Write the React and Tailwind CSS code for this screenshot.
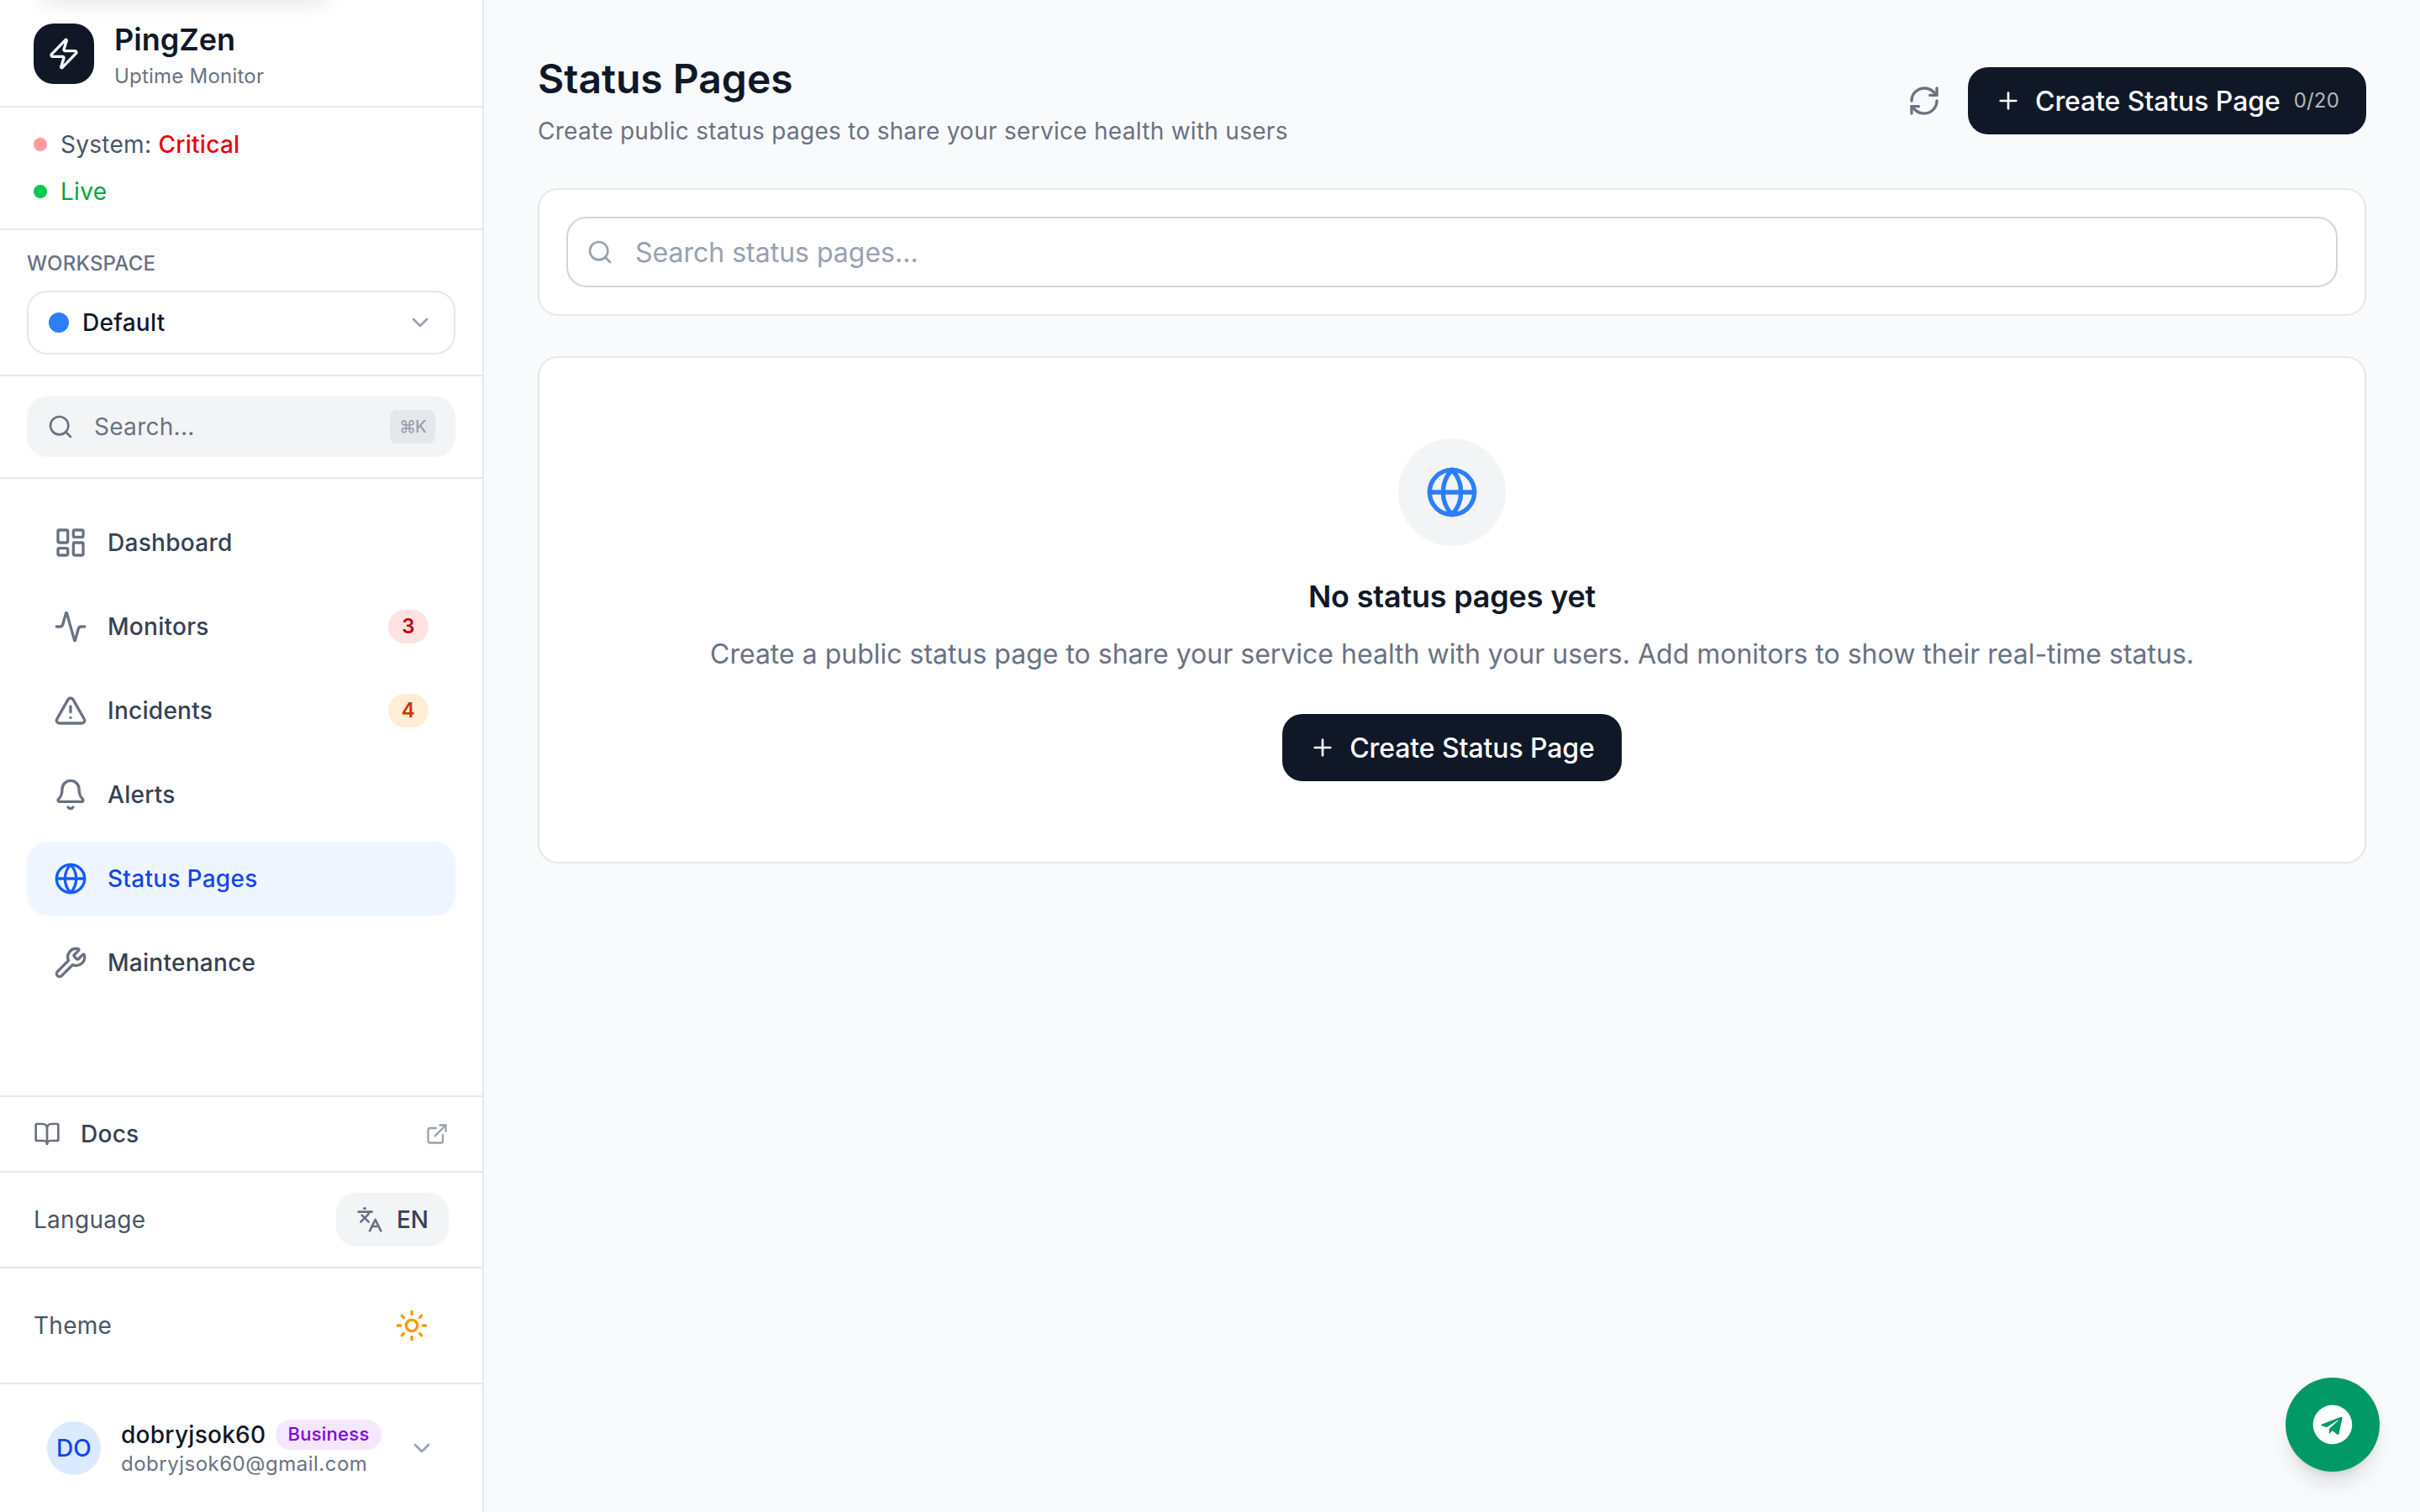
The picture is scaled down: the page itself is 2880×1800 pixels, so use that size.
import React from "react";
import {
  Zap,
  ChevronDown,
  Search,
  LayoutDashboard,
  Activity,
  TriangleAlert,
  Bell,
  Globe,
  Wrench,
  BookOpen,
  ExternalLink,
  Languages,
  Sun,
  Plus,
  RefreshCw,
} from "lucide-react";
import { FaTelegram } from "react-icons/fa";

const navItems = [
  { label: "Dashboard", icon: LayoutDashboard },
  { label: "Monitors", icon: Activity, badge: "3", badgeClass: "bg-red-100 text-red-700" },
  { label: "Incidents", icon: TriangleAlert, badge: "4", badgeClass: "bg-orange-100 text-orange-700" },
  { label: "Alerts", icon: Bell },
  { label: "Status Pages", icon: Globe, active: true },
  { label: "Maintenance", icon: Wrench },
];

const Sidebar = () => {
  return (
    <aside className="relative flex flex-col w-[576px] h-full shrink-0 overflow-hidden bg-white border-r-2 border-gray-200 tracking-[0.28px]">
      <div className="absolute -top-20 left-[50px] w-[340px] h-20 bg-white shadow-[0_4px_24px_rgba(0,0,0,0.1)] rounded-lg"></div>

      <div className="flex items-center gap-6 h-32 pl-10 border-b-2 border-gray-200">
        <div className="flex items-center justify-center w-[72px] h-[72px] mt-0.5 rounded-3xl bg-gray-900 text-white">
          <Zap className="w-10 h-10" strokeWidth={2} />
        </div>
        <div>
          <div className="text-[36px] leading-14 font-semibold tracking-normal text-gray-900">PingZen</div>
          <div className="text-2xl leading-8 tracking-[0.22px] text-gray-500">Uptime Monitor</div>
        </div>
      </div>

      <div className="flex flex-col gap-4 py-6 pl-10 border-b-2 border-gray-200 text-[28px] leading-10">
        <div className="flex items-center gap-4">
          <span className="w-4 h-4 rounded-full bg-[#ff9a9c]"></span>
          <span className="text-gray-600">
            System: <span className="font-medium text-red-600">Critical</span>
          </span>
        </div>
        <div className="flex items-center gap-4">
          <span className="w-4 h-4 rounded-full bg-green-500"></span>
          <span className="text-green-600">Live</span>
        </div>
      </div>

      <div className="px-8 py-6 border-b-2 border-gray-200">
        <div className="mb-4 text-2xl leading-8 font-medium uppercase tracking-[0.2px] text-gray-500">Workspace</div>
        <div className="flex items-center justify-between h-[76px] px-6 rounded-3xl border-2 border-gray-200 bg-white">
          <div className="flex items-center gap-4">
            <span className="w-6 h-6 rounded-full bg-blue-500"></span>
            <span className="text-[28px] font-medium text-gray-900">Default</span>
          </div>
          <ChevronDown className="w-8 h-8 text-gray-400" />
        </div>
      </div>

      <div className="px-8 py-6 border-b-2 border-gray-200">
        <div className="flex items-center h-[72px] pl-6 pr-6 rounded-3xl bg-gray-100">
          <Search className="w-8 h-8 text-gray-500" />
          <span className="flex-1 ml-6 text-[28px] text-gray-500">Search...</span>
          <kbd className="flex items-center justify-center w-[54px] h-10 rounded-lg bg-gray-200 font-['Inter',sans-serif] text-xl font-medium tracking-[-1px] text-gray-400">⌘K</kbd>
        </div>
      </div>

      <nav className="flex-1 flex flex-col gap-3 px-8 py-8">
        {navItems.map((item) => {
          const Icon = item.icon;
          return (
            <div
              key={item.label}
              className={
                item.active
                  ? "flex items-center gap-6 h-[88px] shrink-0 px-8 rounded-3xl bg-blue-50 text-blue-700"
                  : "flex items-center gap-6 h-[88px] shrink-0 px-8 rounded-3xl text-gray-700"
              }
            >
              <Icon className={item.active ? "w-10 h-10 text-blue-600" : "w-10 h-10 text-gray-500"} />
              <span className="flex-1 text-[28px] font-medium">{item.label}</span>
              {item.badge && (
                <span className={`flex items-center justify-center w-12 h-10 rounded-full text-2xl font-semibold ${item.badgeClass}`}>
                  {item.badge}
                </span>
              )}
            </div>
          );
        })}
      </nav>

      <div className="flex items-center justify-between h-[90px] shrink-0 px-10 border-t-2 border-gray-200">
        <div className="flex items-center gap-6">
          <BookOpen className="w-8 h-8 text-gray-500" />
          <span className="text-[28px] font-medium text-gray-700">Docs</span>
        </div>
        <ExternalLink className="w-7 h-7 text-gray-400" />
      </div>

      <div className="flex items-center justify-between px-10 py-6 border-t-2 border-gray-200">
        <span className="text-[28px] text-gray-600">Language</span>
        <div className="flex items-center gap-4 h-16 px-6 rounded-3xl bg-gray-100">
          <Languages className="w-8 h-8 text-gray-500" />
          <span className="text-[28px] font-medium tracking-normal text-gray-700">EN</span>
        </div>
      </div>

      <div className="flex items-center justify-between px-10 py-6 border-t-2 border-gray-200">
        <span className="text-[28px] text-gray-600">Theme</span>
        <div className="p-6">
          <Sun className="w-10 h-10 text-amber-500" />
        </div>
      </div>

      <div className="flex items-center h-[154px] shrink-0 pl-14 pr-14 gap-6 border-t-2 border-gray-200">
        <div className="flex items-center justify-center w-16 h-16 shrink-0 rounded-full bg-blue-100 text-[28px] font-medium text-blue-700">DO</div>
        <div className="flex-1 min-w-0">
          <div className="flex items-center gap-3">
            <span className="text-[28px] leading-9 font-medium text-gray-900">dobryjsok60</span>
            <span className="flex items-center h-9 px-3.5 rounded-full bg-purple-100 text-[22px] font-medium text-purple-700">Business</span>
          </div>
          <div className="mt-px text-2xl leading-8 tracking-[0.5px] text-gray-500">dobryjsok60@gmail.com</div>
        </div>
        <ChevronDown className="w-8 h-8 text-gray-400" />
      </div>
    </aside>
  );
};

const CreateButton = ({ count }) => {
  return (
    <button className="flex items-center gap-4 h-20 px-8 rounded-3xl bg-gray-900 text-white">
      <Plus className="w-8 h-8" />
      <span className="pt-0.5 text-[32px] font-medium tracking-[-0.1px]">Create Status Page</span>
      {count && <span className="text-2xl tracking-[0.2px] text-white/70">{count}</span>}
    </button>
  );
};

const App = () => {
  return (
    <div className="relative flex w-full h-screen overflow-hidden bg-gray-50 font-['Inter',sans-serif]">
      <Sidebar />

      <main className="flex-1 min-w-0 px-16 pt-16">
        <div className="flex items-center justify-between mb-12">
          <div>
            <h1 className="text-5xl leading-[60px] font-semibold text-gray-900">Status Pages</h1>
            <p className="mt-3 text-[28px] leading-10 tracking-[0.28px] text-gray-500">Create public status pages to share your service health with users</p>
          </div>
          <div className="flex items-center gap-4">
            <button className="p-4 text-gray-500">
              <RefreshCw className="w-10 h-10" />
            </button>
            <CreateButton count="0/20" />
          </div>
        </div>

        <div className="p-8 mb-12 rounded-3xl border-2 border-gray-200 bg-white">
          <div className="relative">
            <Search className="absolute left-6 top-[26px] w-8 h-8 text-gray-400" />
            <input
              placeholder="Search status pages..."
              className="w-full h-[84px] pl-20 pr-6 rounded-3xl border-2 border-gray-300 bg-white text-[32px] text-gray-900 placeholder:text-gray-400 outline-none"
            />
          </div>
        </div>

        <div className="flex flex-col items-center py-24 rounded-3xl border-2 border-gray-200 bg-white">
          <div className="flex items-center justify-center w-32 h-32 mb-8 rounded-full bg-gray-100">
            <Globe className="w-16 h-16 text-blue-500" />
          </div>
          <h3 className="mb-4 text-[36px] leading-14 font-semibold tracking-[-0.2px] text-gray-900">No status pages yet</h3>
          <p className="mb-[47px] pt-px text-[32px] leading-12 text-gray-500">
            Create a public status page to share your service health with your users. Add monitors to show their real-time status.
          </p>
          <CreateButton />
        </div>
      </main>

      <button className="absolute right-12 bottom-12 flex items-center justify-center w-28 h-28 rounded-full bg-emerald-600 text-white shadow-xl">
        <FaTelegram className="w-12 h-12" />
      </button>
    </div>
  );
};

export default App;
